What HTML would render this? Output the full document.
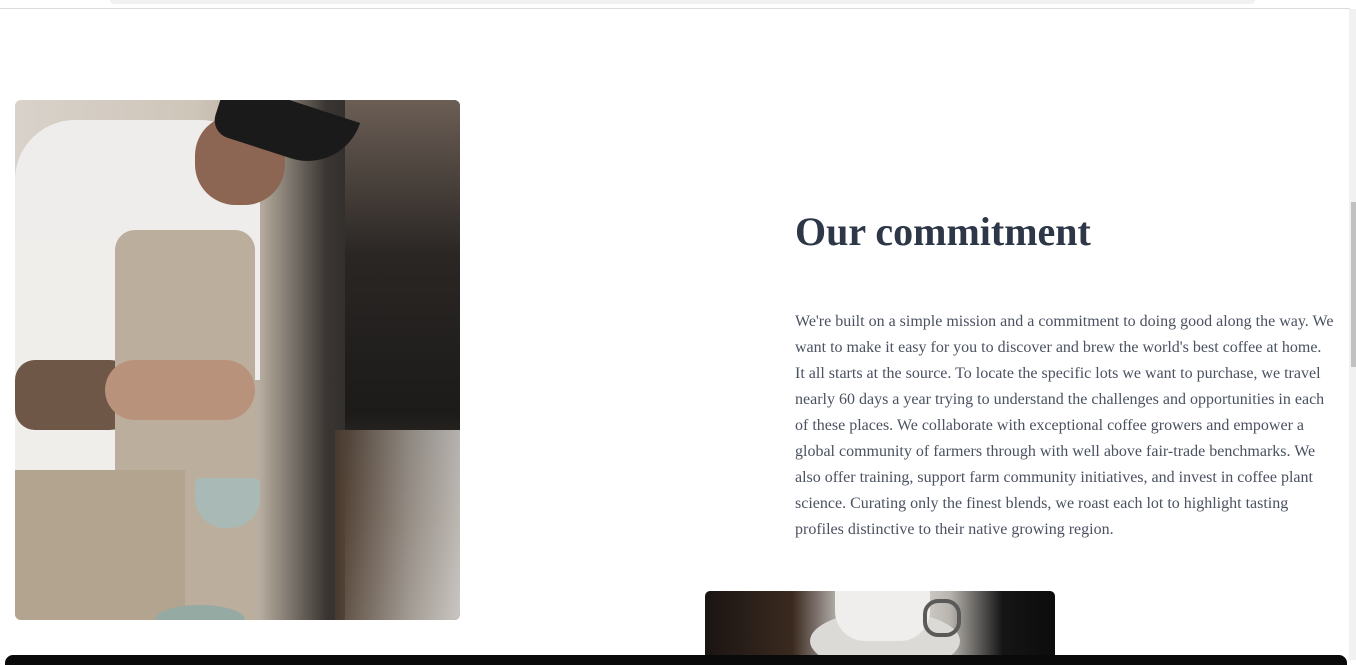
<!DOCTYPE html>
<html><head><style>
html,body{margin:0;padding:0;}
body{width:1356px;height:660px;overflow:hidden;background:#fff;position:relative;font-family:"Liberation Serif",serif;}
.topbar{position:absolute;left:110px;top:0;width:1145px;height:4px;background:#f1f1f1;border-radius:0 0 6px 6px;}
.line{position:absolute;left:0;top:8px;width:1350px;height:1px;background:#dcdcdc;}
.track{position:absolute;left:1349px;top:9px;width:7px;height:651px;background:#f1f1f1;}
.thumb{position:absolute;left:1351px;top:202px;width:5px;height:165px;background:#c1c1c1;}
.img1{position:absolute;left:15px;top:100px;width:445px;height:520px;border-radius:6px;overflow:hidden;
background:linear-gradient(90deg,#d8d2ca 0%,#cfc6ba 40%,#b7ad9f 55%,#3a3532 70%,#242322 85%,#3b3430 100%);}
.img1 div{position:absolute;}
h2{position:absolute;left:795px;top:208px;margin:0;font-size:40px;font-weight:bold;color:#2d3748;}
p{position:absolute;left:795px;top:309px;width:539px;margin:0;font-size:16px;line-height:26px;color:#4a5160;}
.img2{position:absolute;left:705px;top:591px;width:350px;height:69px;border-radius:5px 5px 0 0;overflow:hidden;
background:linear-gradient(90deg,#1a1412 0%,#3a2a20 25%,#c9c6c2 40%,#e8e6e3 55%,#b8b4ae 70%,#151515 85%,#0c0c0c 100%);}
.bottom{position:absolute;left:5px;top:655px;width:1342px;height:10px;background:#0a0a0a;border-radius:8px 8px 0 0;}
</style></head><body>
<div class="topbar"></div>
<div class="line"></div>
<div class="img1">
 <div style="left:330px;top:0;width:115px;height:520px;background:linear-gradient(180deg,#6b5e55 0%,#2a2624 30%,#1c1b1a 60%,#4a3c32 80%,#8b8680 100%);"></div>
 <div style="left:320px;top:330px;width:125px;height:190px;background:linear-gradient(90deg,#4d3a2c,#a9a29a 60%,#d9d6d2);opacity:.8;"></div>
 <div style="left:0;top:20px;width:245px;height:260px;background:#efedeb;border-radius:60px 60px 0 0;"></div>
 <div style="left:0;top:140px;width:110px;height:240px;background:#f0eeeb;"></div>
 <div style="left:0;top:260px;width:115px;height:70px;background:#6f5747;border-radius:20px;"></div>
 <div style="left:100px;top:130px;width:140px;height:390px;background:#bcae9c;border-radius:20px 20px 0 0;"></div>
 <div style="left:0;top:370px;width:170px;height:150px;background:#b3a490;"></div>
 <div style="left:90px;top:260px;width:150px;height:60px;background:#b8927a;border-radius:30px;"></div>
 <div style="left:180px;top:378px;width:65px;height:50px;background:#a9bab6;border-radius:6px 6px 30px 30px;"></div>
 <div style="left:180px;top:15px;width:90px;height:90px;background:#8d6653;border-radius:45%;"></div>
 <div style="left:200px;top:0;width:140px;height:55px;background:#1b1a1a;border-radius:0 0 60px 20px;transform:rotate(18deg);"></div>
 <div style="left:140px;top:505px;width:90px;height:30px;background:#95aaa3;border-radius:50%;"></div>
</div>
<h2>Our commitment</h2>
<p>We're built on a simple mission and a commitment to doing good along the way. We want to make it easy for you to discover and brew the world's best coffee at home. It all starts at the source. To locate the specific lots we want to purchase, we travel nearly 60 days a year trying to understand the challenges and opportunities in each of these places. We collaborate with exceptional coffee growers and empower a global community of farmers through with well above fair-trade benchmarks. We also offer training, support farm community initiatives, and invest in coffee plant science. Curating only the finest blends, we roast each lot to highlight tasting profiles distinctive to their native growing region.</p>
<div class="img2">
 <div style="position:absolute;left:105px;top:20px;width:150px;height:60px;background:#dcdad6;border-radius:50%;"></div>
 <div style="position:absolute;left:130px;top:0;width:95px;height:50px;background:#efeeec;border-radius:0 0 30px 30px;"></div>
 <div style="position:absolute;left:218px;top:8px;width:30px;height:30px;border:4px solid #5a5a58;border-radius:40%;"></div>
</div>
<div class="bottom"></div>
<div class="track"></div>
<div class="thumb"></div>
</body></html>
